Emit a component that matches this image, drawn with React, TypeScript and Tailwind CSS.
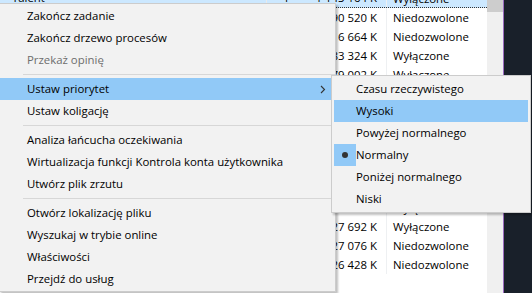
import React from 'react';

type Row = { name?: string; col2?: string; mem: string; status: string; selected?: boolean };

// rows 5-10 sit fully under the submenu, so they stay blank
const rows: Row[] = [
  { name: 'Talent', col2: '1', mem: '1 143 164 K', status: 'Wyłączone', selected: true },
  { mem: '90 520 K', status: 'Niedozwolone' },
  { mem: '16 664 K', status: 'Niedozwolone' },
  { mem: '83 324 K', status: 'Wyłączone' },
  { mem: '79 002 K', status: 'Wyłączone' },
  { mem: '', status: '' },
  { mem: '', status: '' },
  { mem: '', status: '' },
  { mem: '', status: '' },
  { mem: '', status: '' },
  { mem: '35 480 K', status: 'Wyłączone' },
  { mem: '32 700 K', status: 'Wyłączone' },
  { mem: '27 692 K', status: 'Wyłączone' },
  { mem: '27 076 K', status: 'Niedozwolone' },
  { mem: '26 428 K', status: 'Niedozwolone' },
];

type Item = { label: string; disabled?: boolean; active?: boolean; sub?: boolean } | 'sep';

const menu: Item[] = [
  { label: 'Zakończ zadanie' },
  { label: 'Zakończ drzewo procesów' },
  { label: 'Przekaż opinię', disabled: true },
  'sep',
  { label: 'Ustaw priorytet', active: true, sub: true },
  { label: 'Ustaw koligację' },
  'sep',
  { label: 'Analiza łańcucha oczekiwania' },
  { label: 'Wirtualizacja funkcji Kontrola konta użytkownika' },
  { label: 'Utwórz plik zrzutu' },
  'sep',
  { label: 'Otwórz lokalizację pliku' },
  { label: 'Wyszukaj w trybie online' },
  { label: 'Właściwości' },
  { label: 'Przejdź do usług' },
];

const priorities = [
  { label: 'Czasu rzeczywistego' },
  { label: 'Wysoki', active: true },
  { label: 'Powyżej normalnego' },
  { label: 'Normalny', checked: true },
  { label: 'Poniżej normalnego' },
  { label: 'Niski' },
];

export default function App() {
  return (
    <div className="relative h-[293px] w-[532px] overflow-hidden bg-white font-['Segoe_UI','Open_Sans',sans-serif] text-[11.4px] text-black">
      {/* process list behind the menus */}
      <div className="flex h-full">
        <div className="-mt-[11px] w-[487px]">
          {rows.map((r, i) => (
            <div
              key={i}
              className={`flex h-[19px] items-center ${r.selected ? 'border-b border-dotted border-[#333] bg-[#cce8ff]' : ''}`}
            >
              <div className="w-[266px] pl-[12px]">{r.name}</div>
              <div className="w-[40px] border-l border-[#eaeaea] pl-[16px]">{r.col2}</div>
              <div className="w-[80px] pr-[9px] text-right">{r.mem}</div>
              <div className="h-full w-[101px] border-l border-[#eef0f2] pl-[6px] leading-[19px]">{r.status}</div>
            </div>
          ))}
        </div>
        <div className="w-[16px] bg-[#f0f0f0]">
          <div className="h-[12px] bg-[#cdcdcd]" />
        </div>
        <div className="w-px bg-[#9a6bbf]" />
        <div className="flex-1 bg-[#19202a]" />
      </div>

      {/* context menu */}
      <div className="absolute left-[-1px] top-[3px] w-[337px] border border-[#cccccc] bg-[#f2f2f2] py-px shadow-[2px_2px_2px_rgba(0,0,0,0.25)]">
        {menu.map((m, i) =>
          m === 'sep' ? (
            <div key={i} className="flex h-[7px] items-center pl-[23px]">
              <div className="h-px w-full bg-[#d7d7d7]" />
            </div>
          ) : (
            <div
              key={i}
              className={`mr-[2px] flex h-[22px] items-center pl-[27px] ${m.active ? 'bg-[#91c9f7]' : ''} ${m.disabled ? 'text-[#6d6d6d]' : ''}`}
            >
              <span className="flex-1 whitespace-nowrap">{m.label}</span>
              {m.sub && (
                <svg width="6" height="9" viewBox="0 0 6 9" className="mr-[7px]">
                  <path d="M1 1 L4.5 4.5 L1 8" fill="none" stroke="#333" strokeWidth="1.1" />
                </svg>
              )}
            </div>
          )
        )}
      </div>

      {/* priority submenu */}
      <div className="absolute left-[331px] top-[75px] w-[200px] border border-[#cccccc] bg-[#f2f2f2] py-[2px] shadow-[2px_2px_2px_rgba(0,0,0,0.25)]">
        {priorities.map((p, i) => (
          <div key={i} className={`mx-[2px] flex h-[22px] items-center ${p.active ? 'bg-[#91c9f7]' : ''}`}>
            <div className={`flex h-full w-[22px] items-center justify-center ${p.checked ? 'bg-[#91c9f7]' : ''}`}>
              {p.checked && <div className="h-[6px] w-[6px] rounded-full bg-[#333]" />}
            </div>
            <span className="whitespace-nowrap">{p.label}</span>
          </div>
        ))}
      </div>
    </div>
  );
}
